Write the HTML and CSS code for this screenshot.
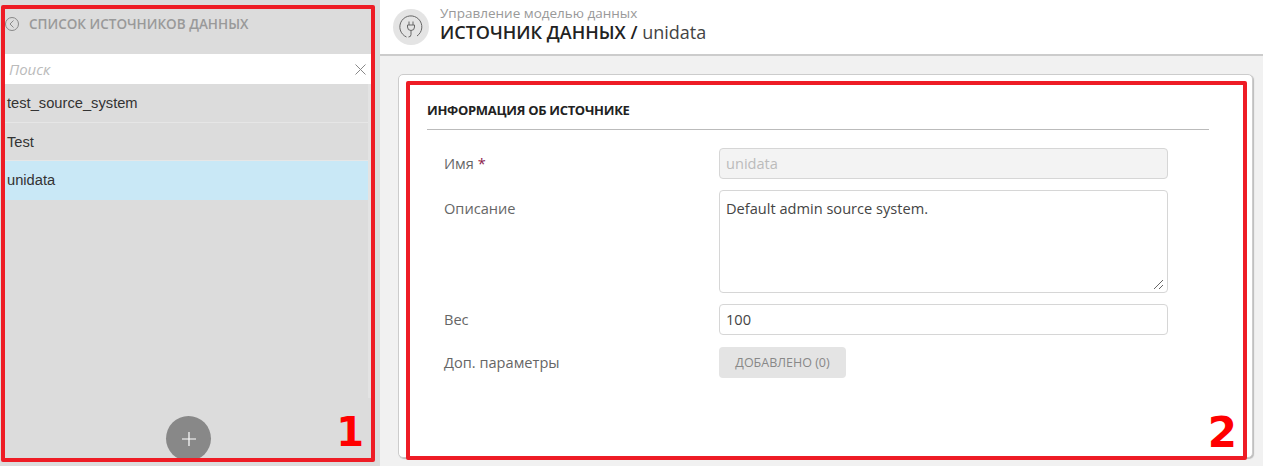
FILE: index.html
```html
<!DOCTYPE html>
<html lang="ru">
<head>
  <meta charset="UTF-8">
  <title>Источник данных</title>
  <link rel="stylesheet" href="styles.css">
</head>
<body>
  <div class="app">
    <aside class="side-panel">
      <div class="side-title">
        <svg class="back-icon" width="14" height="14" viewBox="0 0 14 14" fill="none" stroke="#888" stroke-width="1">
          <circle cx="7" cy="7" r="6.5"/>
          <path d="M8.5 3.5 5 7l3.500 3.500"/>
        </svg>
        <span>СПИСОК ИСТОЧНИКОВ ДАННЫХ</span>
      </div>
      <div class="search-box">
        <span class="search-text">Поиск</span>
        <svg width="11" height="11" viewBox="0 0 11 11" stroke="#888" stroke-width="1" fill="none">
          <path d="M.5.5l10 10M10.5.5l-10 10"/>
        </svg>
      </div>
      <ul class="source-list">
        <li class="source-item">test_source_system</li>
        <li class="source-item">Test</li>
        <li class="source-item active">unidata</li>
      </ul>
      <button class="add-btn" type="button">
        <svg width="14" height="14" viewBox="0 0 14 14" stroke="#fff" stroke-width="1.2">
          <path d="M7 0v14M0 7h14"/>
        </svg>
      </button>
    </aside>

    <main class="content">
      <header class="top-bar">
        <div class="top-icon">
          <svg width="24" height="24" viewBox="0 0 24 24" fill="none" stroke="#666" stroke-width="1">
            <path d="M7.5 22A11 11 0 1 1 18 21"/>
            <path d="M10 6.5V10M14 6.5V10M8.500 10h7v2a3.500 3.500 0 0 1-7 0z"/>
            <path d="M12 15.500v4a2.500 2.500 0 0 1-2.500 2.500"/>
          </svg>
        </div>
        <div class="top-text">
          <div class="crumb">Управление моделью данных</div>
          <div class="page-title">ИСТОЧНИК ДАННЫХ / <span class="page-name">unidata</span></div>
        </div>
      </header>

      <section class="card">
        <h2 class="card-title">ИНФОРМАЦИЯ ОБ ИСТОЧНИКЕ</h2>
        <div class="form-row">
          <label class="form-label">Имя <span class="req">*</span></label>
          <div class="field disabled">unidata</div>
        </div>
        <div class="form-row">
          <label class="form-label area-label">Описание</label>
          <div class="field area">Default admin source system.
            <svg class="grip" width="11" height="11" viewBox="0 0 11 11" stroke="#666" stroke-width="1">
              <path d="M1 11 10 2M6 11l4-4"/>
            </svg>
          </div>
        </div>
        <div class="form-row">
          <label class="form-label">Вес</label>
          <div class="field">100</div>
        </div>
        <div class="form-row">
          <label class="form-label">Доп. параметры</label>
          <button class="added-btn" type="button">ДОБАВЛЕНО (0)</button>
        </div>
      </section>
    </main>
  </div>

  <!-- red callouts drawn over the screenshot -->
  <div class="callout callout-1"><span class="callout-num">1</span></div>
  <div class="callout callout-2"><span class="callout-num">2</span></div>
</body>
</html>
```

FILE: styles.css
```css
* {
  margin: 0;
  padding: 0;
  box-sizing: border-box;
}

html, body {
  height: 100%;
  overflow: hidden;
}

body {
  font-family: "Open Sans", sans-serif;
  color: #333;
  background: #f1f1f1;
}

.app {
  display: flex;
  height: 466px;
}

/* ===== Left panel ===== */
.side-panel {
  position: relative;
  width: 380px;
  flex-shrink: 0;
  padding: 0 9px 0 5px;
  background: #dcdcdc;
}

.side-title {
  display: flex;
  align-items: center;
  gap: 10px;
  height: 54px;
  padding: 0 0 6px;
  font-size: 13.5px;
  font-weight: 600;
  color: #999;
}

.search-box {
  display: flex;
  align-items: center;
  justify-content: space-between;
  width: 366px;
  height: 30px;
  padding: 0 5px 0 4px;
  background: #fff;
}

.search-text {
  font-size: 15px;
  font-style: italic;
  color: #bbb;
}

/* the light strip on the right is the list's scroll track */
.source-list {
  width: 366px;
  height: 314px;
  border-right: 3px solid #e3e3e3;
  list-style: none;
}

.source-item {
  height: 38.5px;
  padding-left: 2px;
  border-bottom: 1px solid #e6e6e6;
  font-family: "Liberation Sans", sans-serif;
  font-size: 14.7px;
  line-height: 38px;
  color: #333;
}

.source-item.active {
  background: #c9e8f6;
  border-bottom: 0;
}

.add-btn {
  position: absolute;
  left: 166px;
  top: 416px;
  display: flex;
  align-items: center;
  justify-content: center;
  width: 45px;
  height: 45px;
  border: 0;
  border-radius: 50%;
  background: #888;
}

/* ===== Content ===== */
.content {
  flex: 1;
  min-width: 0;
}

.top-bar {
  display: flex;
  align-items: center;
  gap: 11px;
  height: 56px;
  padding: 0 0 1px 13px;
  background: #fff;
  border-bottom: 2px solid #ccc;
}

.top-icon {
  display: flex;
  align-items: center;
  justify-content: center;
  width: 36px;
  height: 36px;
  border-radius: 50%;
  background: #e4e4e4;
}

.top-text {
  padding-bottom: 6px;
}

.crumb {
  font-size: 13.5px;
  line-height: 16px;
  color: #999;
}

.page-title {
  font-size: 18px;
  line-height: 22px;
  font-weight: 600;
  color: #222;
}

.page-name {
  font-weight: 400;
  color: #444;
}

.card {
  width: 855px;
  height: 384px;
  margin: 18px 0 0 18px;
  padding: 26px 43px 0 28px;
  background: #fff;
  border: 1px solid #ccc;
  border-radius: 5px;
  box-shadow: 1px 1px 1px #bbb;
}

.card-title {
  height: 29px;
  margin-bottom: 18px;
  border-bottom: 1px solid #bbb;
  font-size: 13px;
  letter-spacing: -0.3px;
  line-height: 18px;
  font-weight: 700;
  color: #222;
}

.form-row {
  display: flex;
  align-items: center;
  margin-bottom: 11px;
  padding-left: 17px;
}

.form-row:nth-child(4) {
  margin-bottom: 12px;
}

.form-label {
  width: 275px;
  flex-shrink: 0;
  padding-bottom: 2px;
  font-size: 14.6px;
  color: #666;
}

.req {
  color: #8b1a4a;
}

.area-label {
  align-self: flex-start;
  padding: 8px 0 0;
}

.field {
  position: relative;
  width: 449px;
  height: 31px;
  padding: 0 6px;
  border: 1px solid #d6d6d6;
  border-radius: 4px;
  font-size: 14.6px;
  line-height: 29px;
  color: #444;
}

.field.disabled {
  background: #f3f3f3;
  color: #bbb;
}

.field.area {
  height: 103px;
  line-height: 20px;
  padding-top: 7px;
}

.grip {
  position: absolute;
  right: 3px;
  bottom: 3px;
}

.added-btn {
  width: 127px;
  height: 31px;
  border: 0;
  border-radius: 4px;
  background: #e4e4e4;
  font-family: inherit;
  font-size: 12.5px;
  color: #888;
}

/* ===== Callouts ===== */
.callout {
  position: absolute;
  border: 4px solid #ee1c25;
  border-radius: 2px;
  pointer-events: none;
}

.callout-1 {
  left: 1px;
  top: 5px;
  width: 374px;
  height: 457px;
}

.callout-2 {
  left: 406px;
  top: 81px;
  width: 841px;
  height: 379px;
}

.callout-num {
  position: absolute;
  font-family: "DejaVu Sans", sans-serif;
  line-height: 50px;
  font-weight: 700;
  color: #f00;
}

.callout-1 .callout-num {
  right: 7px;
  bottom: 1px;
  font-size: 40px;
}

.callout-2 .callout-num {
  right: 6px;
  bottom: -2px;
  font-size: 42px;
}
```
